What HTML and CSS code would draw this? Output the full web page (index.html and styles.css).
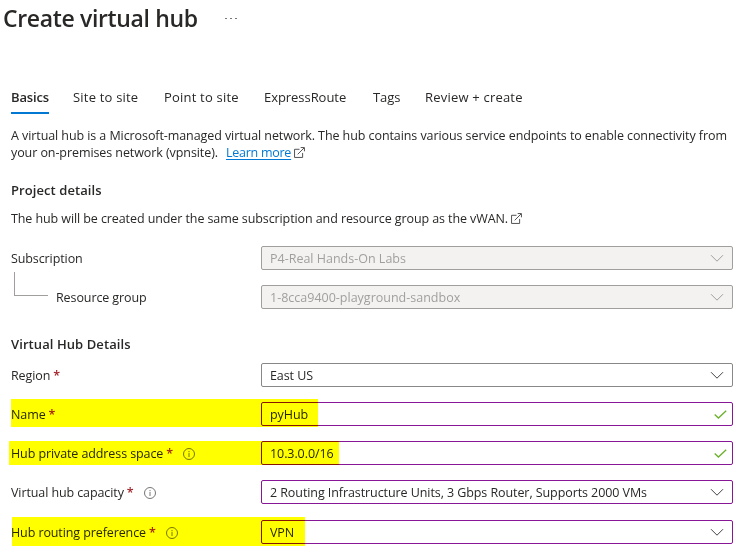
FILE: index.html
```html
<!DOCTYPE html>
<html lang="en">
<head>
<meta charset="utf-8">
<title>Create virtual hub</title>
<link rel="stylesheet" href="styles.css">
</head>
<body>
<svg class="defs" aria-hidden="true">
  <symbol id="chevron" viewBox="0 0 14 9"><path d="M1 1.2 7 7.2 13 1.2"/></symbol>
  <symbol id="check" viewBox="0 0 13 9"><path d="M.7 4.5 4.4 8 12.2.7"/></symbol>
  <symbol id="external" viewBox="0 0 12 12"><path d="M6 2.5H.6v8.9h8.8V6.5M4 8 10.9 1.100M7.300.6h4.100v4.100"/></symbol>
  <symbol id="info" viewBox="0 0 12 12"><circle cx="6" cy="6" r="5.500"/><path d="M6 5v4M6 3v1.200"/></symbol>
</svg>

<header class="header">
  <h1 class="title">Create virtual hub</h1>
  <div class="more"><i></i><i></i><i></i></div>
</header>

<main class="content">
  <nav class="tabs">
    <a class="tab active">Basics</a>
    <a class="tab site">Site to site</a>
    <a class="tab point">Point to site</a>
    <a class="tab express">ExpressRoute</a>
    <a class="tab tags">Tags</a>
    <a class="tab review">Review + create</a>
  </nav>

  <p class="intro">A virtual hub is a Microsoft-managed virtual network. The hub contains various service endpoints to enable connectivity from<br>your on-premises network (vpnsite).<a class="link">Learn more</a><svg class="external"><use href="#external"/></svg></p>

  <section>
    <h2 class="heading">Project details</h2>
    <p class="note">The hub will be created under the same subscription and resource group as the vWAN.<svg class="external"><use href="#external"/></svg></p>
    <div class="rows project">
      <div class="row">
        <label class="label">Subscription</label>
        <div class="field disabled"><span>P4-Real Hands-On Labs</span><svg class="chevron"><use href="#chevron"/></svg></div>
      </div>
      <div class="row nested">
        <label class="label">Resource group</label>
        <div class="field disabled"><span>1-8cca9400-playground-sandbox</span><svg class="chevron"><use href="#chevron"/></svg></div>
      </div>
    </div>
  </section>

  <section class="hub">
    <h2 class="heading">Virtual Hub Details</h2>
    <div class="rows details">
      <div class="row">
        <label class="label">Region<b class="req">*</b></label>
        <div class="field"><span>East US</span><svg class="chevron"><use href="#chevron"/></svg></div>
      </div>
      <div class="row marked name">
        <label class="label">Name<b class="req">*</b></label>
        <div class="field edited"><span>pyHub</span><svg class="check"><use href="#check"/></svg></div>
      </div>
      <div class="row marked address">
        <label class="label">Hub private address space<b class="req">*</b><svg class="info"><use href="#info"/></svg></label>
        <div class="field edited"><span>10.3.0.0/16</span><svg class="check"><use href="#check"/></svg></div>
      </div>
      <div class="row">
        <label class="label">Virtual hub capacity<b class="req">*</b><svg class="info"><use href="#info"/></svg></label>
        <div class="field edited"><span>2 Routing Infrastructure Units, 3 Gbps Router, Supports 2000 VMs</span><svg class="chevron"><use href="#chevron"/></svg></div>
      </div>
      <div class="row marked routing">
        <label class="label">Hub routing preference<b class="req">*</b><svg class="info"><use href="#info"/></svg></label>
        <div class="field edited"><span>VPN</span><svg class="chevron"><use href="#chevron"/></svg></div>
      </div>
    </div>
  </section>
</main>
</body>
</html>
```
FILE: styles.css
```css
* { box-sizing: border-box; }

body {
  margin: 0;
  min-height: 552px;
  background: #fff;
  color: #292827;
  font: 12.5px/17px "Open Sans", "Noto Sans", sans-serif;
  letter-spacing: -0.08px;
  white-space: nowrap;
}

h1, h2, p { margin: 0; }
svg { fill: none; stroke: #444; flex: none; }
.defs { display: none; }

.header {
  display: flex;
  align-items: center;
  height: 34px;
  padding: 1px 0 0 3px;
}
.title {
  width: 222px;
  font-size: 23px;
  font-weight: 600;
  line-height: 32px;
  letter-spacing: -0.35px;
}
.more { display: flex; gap: 3px; padding-top: 1px; }
.more i { width: 2px; height: 1px; background: #777; }

.content { padding: 54px 8px 0 11px; }

.tabs {
  display: flex;
  font-size: 13px;
  line-height: 18px;
  letter-spacing: 0.2px;
}
.tab { padding-bottom: 6px; border-bottom: 2px solid transparent; }
.tab.active {
  width: 38px;
  margin-right: 24px;
  border-color: #0078d4;
  font-weight: 600;
  letter-spacing: -0.15px;
}
.site { width: 91px; }
.point { width: 100px; }
.express { width: 109px; letter-spacing: -0.05px; }
.tags { width: 52px; letter-spacing: -0.1px; }

.intro { height: 34px; margin-top: 14px; line-height: 16.5px; }
.link {
  margin-left: 8px;
  color: #0078d4;
  letter-spacing: -0.26px;
  text-decoration: underline;
  text-underline-offset: 2px;
}
.external {
  width: 11px;
  height: 11px;
  margin-left: 3px;
  vertical-align: -1px;
}

.heading {
  margin-top: 19px;
  font-size: 13px;
  font-weight: 600;
  line-height: 18px;
  letter-spacing: 0.08px;
}
.note { margin-top: 11px; line-height: 18px; letter-spacing: -0.09px; }
.rows { display: grid; gap: 15px; }
.project { margin-top: 18px; }
.hub .heading { margin-top: 26px; }
.details { margin-top: 10px; }

.row {
  position: relative;
  display: grid;
  grid-template: 24px / 250px 472px;
}
.label {
  display: flex;
  align-items: center;
  padding-top: 2px;
  line-height: 22px;
  letter-spacing: -0.1px;
}
.nested .label { padding-left: 45px; }
.nested::before {
  content: "";
  position: absolute;
  left: 3px;
  top: -13px;
  width: 33px;
  height: 23px;
  border: solid #a19f9d;
  border-width: 0 0 1px 1px;
}
.req { margin-left: 3px; color: #a4262c; font-weight: 600; }
.info { width: 12px; height: 12px; margin-left: 10px; stroke: #666; stroke-width: 0.9; }

.field {
  display: flex;
  align-items: center;
  justify-content: space-between;
  padding: 0 8px;
  border: 1px solid #8a8886;
  border-radius: 2px;
}
.field span { padding-top: 2px; line-height: 20px; }
.disabled { background: #f3f2f1; border-color: #a19f9d; color: #a19f9d; letter-spacing: 0; }
.disabled .chevron { stroke: #a19f9d; }
.edited { border-color: #881798; }
.chevron { width: 14px; height: 9px; }
.check { width: 13px; height: 9px; margin-right: -3px; stroke: #6bb02c; stroke-width: 1.3; }

/* highlighter strokes over the edited rows */
.marked::after {
  content: "";
  position: absolute;
  left: 0;
  top: -3px;
  width: 307px;
  height: 28px;
  background: #ff0;
  mix-blend-mode: multiply;
}
.address::after { left: -2px; top: 0; width: 330px; height: 24px; }
.routing { margin-top: 1px; }
.routing::after { left: 1px; width: 293px; height: 29px; }
```
